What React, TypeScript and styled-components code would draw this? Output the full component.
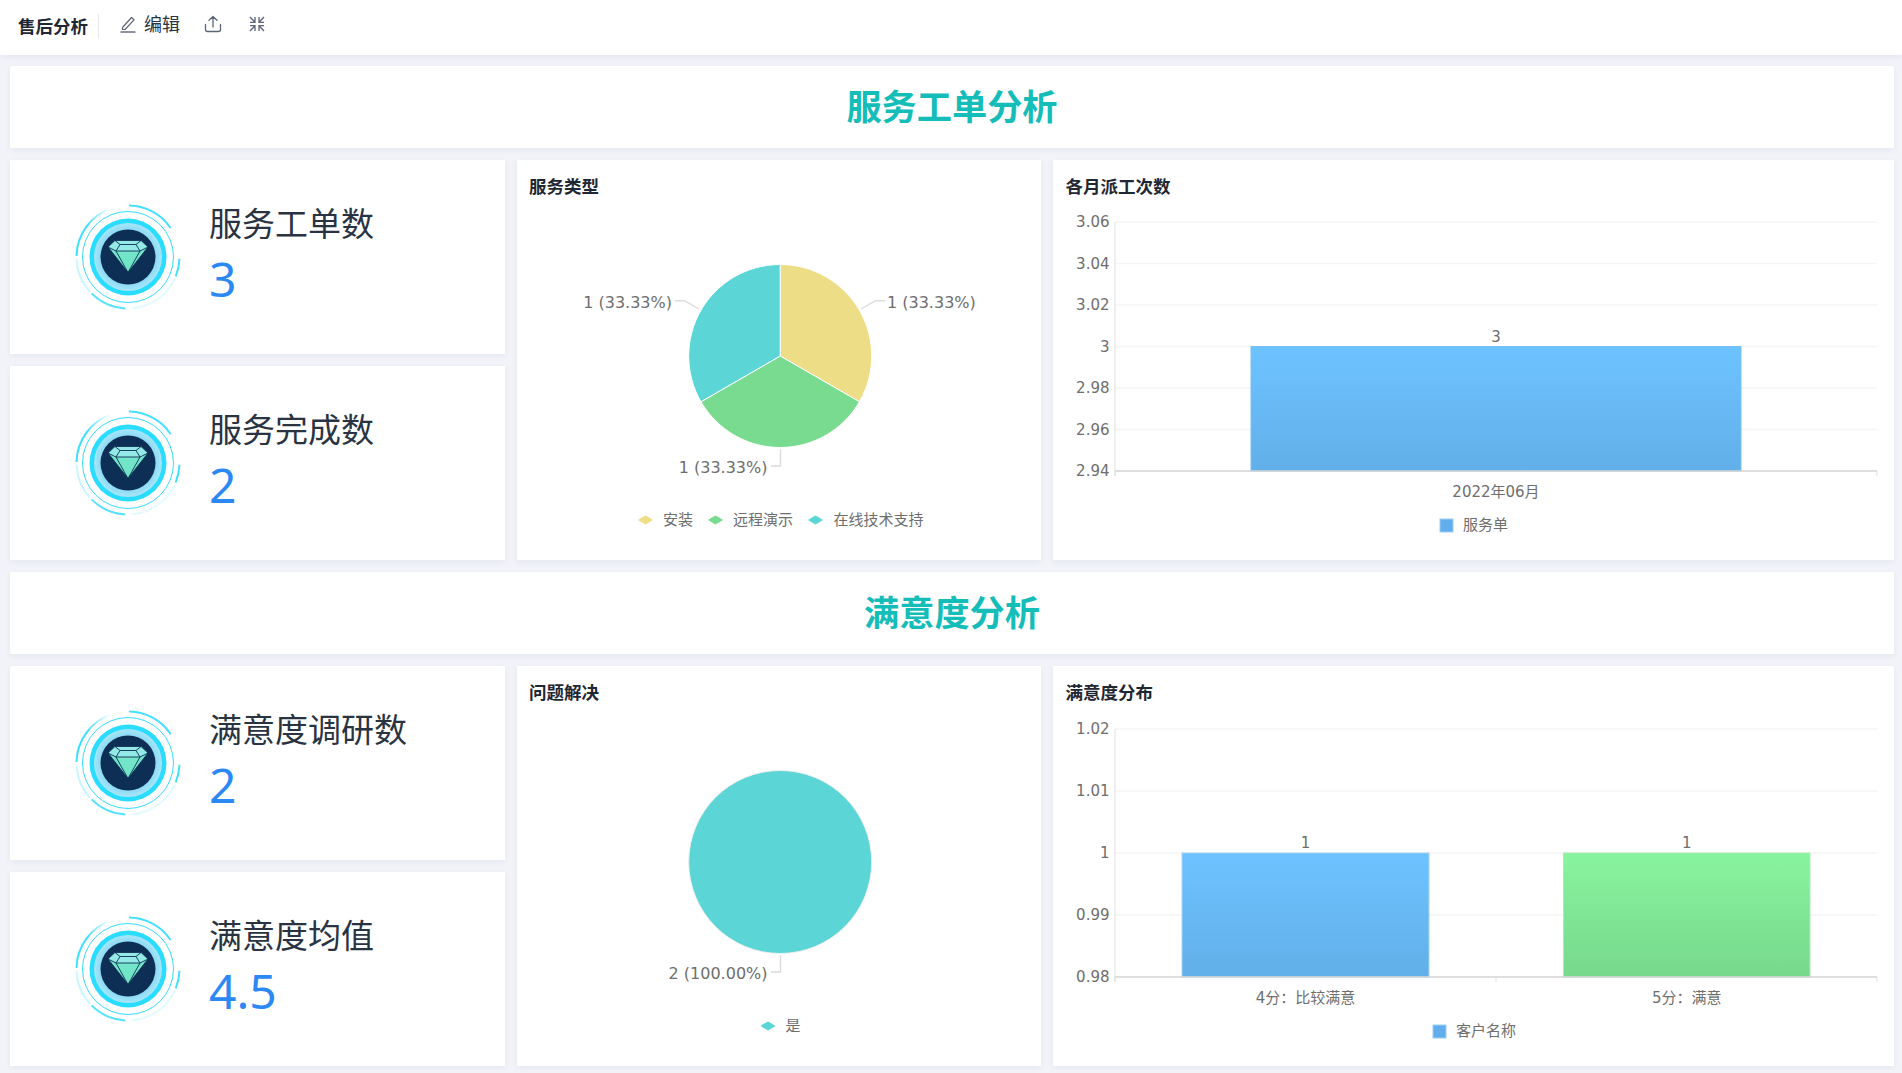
import React from 'react';
import styled, { createGlobalStyle } from 'styled-components';

const GlobalStyle = createGlobalStyle`
  html, body {
    margin: 0;
    padding: 0;
    height: 100%;
    overflow: hidden;
    background: #f1f3f8;
    font-family: "Noto Sans", "Noto Sans CJK SC", sans-serif;
  }
`;

const Page = styled.div`
  display: flex;
  flex-direction: column;
  height: 1073px;
  background: #f1f3f8;
`;
const TopBar = styled.header`
  display: flex;
  align-items: center;
  height: 55px;
  flex: none;
  box-sizing: border-box;
  padding: 0 0 2px 18px;
  background: #fff;
  box-shadow: 0 2px 6px rgba(40, 50, 100, 0.06);
`;
const BoardName = styled.span`
  font-size: 17.5px;
  font-weight: 700;
  color: #1f2733;
  padding-right: 10px;
  border-right: 1px solid #e6e8ec;
  line-height: 25px;
  margin-right: 20px;
`;
const EditText = styled.span`
  font-size: 18px;
  color: #2a3342;
  margin: 0 24px 8px 7px;
`;
const IconButton = styled.span<{ $gap?: number }>`
  display: flex;
  color: #5a6678;
  margin-bottom: 5px;
  margin-right: ${({ $gap }) => $gap ?? 0}px;
`;
const Content = styled.main`
  display: flex;
  flex-direction: column;
  gap: 12px;
  padding: 11px 8px 0 10px;
`;
const SectionHead = styled.h2`
  margin: 0;
  height: 82px;
  box-sizing: border-box;
  padding-bottom: 5px;
  display: flex;
  align-items: center;
  justify-content: center;
  background: #fff;
  font-size: 35.2px;
  font-weight: 700;
  color: #14bdb8;
  box-shadow: 0 2px 6px rgba(40, 50, 100, 0.06);
`;
const Row = styled.section`
  display: grid;
  grid-template-columns: 494.5px 524.5px 1fr;
  gap: 12px;
  height: 400px;
`;
const StatColumn = styled.div`
  display: flex;
  flex-direction: column;
  gap: 12px;
`;
const StatCard = styled.div`
  flex: 1;
  display: flex;
  align-items: center;
  padding-left: 58px;
  gap: 21px;
  background: #fff;
  box-shadow: 0 2px 6px rgba(40, 50, 100, 0.06);
`;
const StatBody = styled.div`
  display: flex;
  flex-direction: column;
  gap: 5px;
  padding-bottom: 2px;
`;
const StatLabel = styled.div`
  font-size: 33px;
  line-height: 40px;
  color: #2a3342;
`;
const StatValue = styled.div`
  font-size: 48px;
  line-height: 60px;
  color: #2b88f5;
`;
const ChartCard = styled.div`
  display: flex;
  flex-direction: column;
  background: #fff;
  box-shadow: 0 2px 6px rgba(40, 50, 100, 0.06);
`;
const ChartTitle = styled.h3`
  margin: 0;
  height: 54px;
  flex: none;
  box-sizing: border-box;
  padding: 14px 0 0 12.5px;
  font-size: 17.5px;
  line-height: 24px;
  font-weight: 700;
  color: #1f2733;
`;
const ChartSvg = styled.svg`
  display: block;
  flex: 1;
  width: 100%;
  min-height: 0;
`;
const ChartText = styled.text<{ $size?: number }>`
  font-family: "DejaVu Sans", "Noto Sans CJK SC", sans-serif;
  font-size: ${({ $size }) => $size ?? 15}px;
  fill: #6e6e6e;
  dominant-baseline: central;
`;

type Slice = { color: string; from: number; to: number };
type Leader = { points: string; label: string; x: number; y: number; anchor: 'start' | 'end' };
type LegendItem = { color: string; label: string; x: number; textX: number };

const polar = (cx: number, cy: number, r: number, deg: number): [number, number] => {
  const a = ((deg - 90) * Math.PI) / 180;
  return [cx + r * Math.cos(a), cy + r * Math.sin(a)];
};
const arc = (cx: number, cy: number, r: number, from: number, to: number) => {
  const [x1, y1] = polar(cx, cy, r, from);
  const [x2, y2] = polar(cx, cy, r, to);
  return `M${x1} ${y1}A${r} ${r} 0 ${to - from > 180 ? 1 : 0} 1 ${x2} ${y2}`;
};

function Pie({ slices, leaders, legend, legendY }: { slices: Slice[]; leaders: Leader[]; legend: LegendItem[]; legendY: number }) {
  const cx = 263.2;
  const cy = 142;
  const r = 91.5;
  return (
    <ChartSvg viewBox="0 0 524.5 346">
      {slices.length === 1 ? (
        <circle cx={cx} cy={cy} r={r} fill={slices[0].color} stroke="#eef0f0" strokeWidth={1} />
      ) : (
        slices.map((s) => (
          <path key={s.color} d={`${arc(cx, cy, r, s.from, s.to)}L${cx} ${cy}Z`} fill={s.color} stroke="#fff" strokeWidth={1} />
        ))
      )}
      {leaders.map((l) => (
        <g key={l.points}>
          <polyline points={l.points} fill="none" stroke="#dcdcdc" strokeWidth={1.4} />
          <ChartText $size={16} x={l.x} y={l.y} textAnchor={l.anchor}>
            {l.label}
          </ChartText>
        </g>
      ))}
      {legend.map((item) => (
        <g key={item.label}>
          <path
            transform={`translate(${item.x} ${legendY - 4.5})`}
            d="M0 4.5Q4 1.5 7.5 0Q11 1.5 15 4.5Q11 7 7.5 9Q4 7 0 4.5Z"
            fill={item.color}
          />
          <ChartText x={item.textX} y={legendY}>
            {item.label}
          </ChartText>
        </g>
      ))}
    </ChartSvg>
  );
}

type Bar = { x: number; w: number; label: string; top: string; bottom: string; border: string; value: string };

function Bars({ ticks, top, bars, ticksX, legend, id }: { ticks: string[]; top: number; bars: Bar[]; ticksX: number[]; legend: { label: string; x: number; textX: number }; id: string }) {
  const left = 62;
  const right = 824;
  const bottom = 257;
  const step = (bottom - top) / (ticks.length - 1);
  const barTop = top + step * (ticks.length === 7 ? 3 : 2);
  return (
    <ChartSvg viewBox="0 0 841 346">
      <defs>
        {bars.map((b, i) => (
          <linearGradient key={i} id={`${id}${i}`} x1="0" y1="0" x2="0" y2="1">
            <stop offset="0" stopColor={b.top} />
            <stop offset="1" stopColor={b.bottom} />
          </linearGradient>
        ))}
      </defs>
      {ticks.map((t, i) => {
        const y = top + step * i;
        return (
          <g key={t}>
            {i < ticks.length - 1 && <line x1={left} x2={right} y1={y} y2={y} stroke="#f5f5f6" strokeWidth={1.4} />}
            <ChartText x={56.5} y={y} textAnchor="end">
              {t}
            </ChartText>
          </g>
        );
      })}
      <line x1={left} x2={left} y1={top} y2={bottom + 5} stroke="#dfdfdf" />
      {bars.map((b, i) => (
        <g key={b.label}>
          <rect x={b.x} y={barTop} width={b.w} height={bottom - barTop} fill={`url(#${id}${i})`} stroke={b.border} />
          <ChartText x={b.x + b.w / 2} y={barTop - 10} textAnchor="middle">
            {b.value}
          </ChartText>
          <ChartText x={b.x + b.w / 2} y={bottom + 21} textAnchor="middle">
            {b.label}
          </ChartText>
        </g>
      ))}
      <line x1={left} x2={right} y1={bottom} y2={bottom} stroke="#d4d4d4" strokeWidth={1.4} />
      {ticksX.map((x) => (
        <line key={x} x1={x} x2={x} y1={bottom} y2={bottom + 5} stroke="#dfdfdf" />
      ))}
      <rect x={legend.x} y={305} width={13} height={13} fill="#62aeec" stroke="#9ccdf3" />
      <ChartText x={legend.textX} y={311}>
        {legend.label}
      </ChartText>
    </ChartSvg>
  );
}

function RingIcon() {
  const c = 60;
  return (
    <svg width={120} height={120} viewBox="0 0 120 120">
      <defs>
        <linearGradient id="fadeA" x1="0" y1="1" x2="1" y2="0">
          <stop offset="0" stopColor="#3fdfff" />
          <stop offset="0.5" stopColor="#3fdfff" />
          <stop offset="1" stopColor="#3fdfff" stopOpacity="0" />
        </linearGradient>
        <linearGradient id="fadeB" x1="1" y1="0" x2="0" y2="1">
          <stop offset="0" stopColor="#3fdfff" stopOpacity="0.05" />
          <stop offset="1" stopColor="#3fdfff" stopOpacity="0.45" />
        </linearGradient>
        <linearGradient id="fadeC" x1="0" y1="0" x2="1" y2="1">
          <stop offset="0" stopColor="#3fdfff" stopOpacity="0.35" />
          <stop offset="1" stopColor="#3fdfff" stopOpacity="0" />
        </linearGradient>
        <radialGradient id="glow" cx="0.5" cy="0.5" r="0.5">
          <stop offset="0.72" stopColor="#7fd4f2" />
          <stop offset="1" stopColor="#a8e6f8" />
        </radialGradient>
      </defs>
      <circle cx={c} cy={c} r={45.5} fill="none" stroke="#35dcff" strokeWidth={1} />
      <circle cx={c} cy={c} r={38.5} fill="#2adcff" />
      <circle cx={c} cy={c} r={34} fill="url(#glow)" />
      <circle cx={c} cy={c} r={27.5} fill="#0e2f55" />
      <path d={arc(c, c, 51.5, 2, 55)} fill="none" stroke="#45dfff" strokeWidth={2} strokeLinecap="round" />
      <path d={arc(c, c, 51.5, 92, 112)} fill="none" stroke="#45dfff" strokeWidth={2} />
      <path d={arc(c, c, 51.5, 115, 175)} fill="none" stroke="url(#fadeC)" strokeWidth={2} />
      <path d={arc(c, c, 51.5, 183, 225)} fill="none" stroke="#55e2ff" strokeWidth={2} />
      <path d={arc(c, c, 51.5, 228, 268)} fill="none" stroke="url(#fadeB)" strokeWidth={2} />
      <path d={arc(c, c, 51.5, 271, 340)} fill="none" stroke="url(#fadeA)" strokeWidth={2} />
      <path d="M47 43.5H73L80 50L60 75.5L40 50Z" fill="#72e4c8" />
      <path d="M47 43.5H73L80 50L72 54H48L40 50Z" fill="#93e9e6" />
      <path d="M47 43.5H73L80 50L60 75.5L40 50ZM40 50L48 54H72L80 50M52 47.5H68L72 54L60 75.5L48 54ZM47 43.5L52 47.5M73 43.5L68 47.5" fill="none" stroke="#0e2f55" strokeWidth={0.9} strokeLinejoin="round" />
    </svg>
  );
}

const STAT_ROWS = [
  [
    { label: '服务工单数', value: '3' },
    { label: '服务完成数', value: '2' },
  ],
  [
    { label: '满意度调研数', value: '2' },
    { label: '满意度均值', value: '4.5' },
  ],
];

const YELLOW = '#eddd86';
const GREEN = '#78db8f';
const TEAL = '#5bd5d6';

function StatCards({ items }: { items: { label: string; value: string }[] }) {
  return (
    <StatColumn>
      {items.map((s) => (
        <StatCard key={s.label}>
          <RingIcon />
          <StatBody>
            <StatLabel>{s.label}</StatLabel>
            <StatValue>{s.value}</StatValue>
          </StatBody>
        </StatCard>
      ))}
    </StatColumn>
  );
}

export default function App() {
  return (
    <Page>
      <GlobalStyle />
      <TopBar>
        <BoardName>售后分析</BoardName>
        <IconButton>
          <svg width={18} height={18} viewBox="0 0 18 18" fill="none" stroke="currentColor" strokeWidth={1.2} strokeLinejoin="round">
            <path d="M3.5 12.5L12.5 2.5L15 4.8L6 14.5H3.5Z" />
            <path d="M1.5 17H16.5" strokeWidth={1.4} />
          </svg>
        </IconButton>
        <EditText>编辑</EditText>
        <IconButton $gap={27}>
          <svg width={18} height={18} viewBox="0 0 18 18" fill="none" stroke="currentColor" strokeWidth={1.3} strokeLinecap="round" strokeLinejoin="round">
            <path d="M9 12V1.5M5 5.3L9 1.5L13 5.3" />
            <path d="M1.5 9.5V14.5A2 2 0 0 0 3.5 16.5H14.5A2 2 0 0 0 16.5 14.5V9.5" />
          </svg>
        </IconButton>
        <IconButton>
          <svg width={16} height={16} viewBox="0 0 16 16" fill="none" stroke="currentColor" strokeWidth={1.3}>
            <path d="M1 1L5.5 5.8M6 1V6.3H1" />
            <path d="M15 1L10.5 5.8M10 1V6.3H15" />
            <path d="M1 15L5.5 10.2M6 15V9.7H1" />
            <path d="M15 15L10.5 10.2M10 15V9.7H15" />
          </svg>
        </IconButton>
      </TopBar>
      <Content>
        <SectionHead>服务工单分析</SectionHead>
        <Row>
          <StatCards items={STAT_ROWS[0]} />
          <ChartCard>
            <ChartTitle>服务类型</ChartTitle>
            <Pie
              slices={[
                { color: YELLOW, from: 0, to: 120 },
                { color: GREEN, from: 120, to: 240 },
                { color: TEAL, from: 240, to: 360 },
              ]}
              leaders={[
                { points: '344,95 358.5,86.7 368,86.7', label: '1 (33.33%)', x: 370, y: 88, anchor: 'start' },
                { points: '182,95 167.5,86.7 158,86.7', label: '1 (33.33%)', x: 155, y: 88, anchor: 'end' },
                { points: '263.5,235 263.5,252 254,252', label: '1 (33.33%)', x: 250.5, y: 253, anchor: 'end' },
              ]}
              legend={[
                { color: YELLOW, label: '安装', x: 121, textX: 146 },
                { color: GREEN, label: '远程演示', x: 191, textX: 216 },
                { color: TEAL, label: '在线技术支持', x: 291, textX: 316.5 },
              ]}
              legendY={306}
            />
          </ChartCard>
          <ChartCard>
            <ChartTitle>各月派工次数</ChartTitle>
            <Bars
              id="month"
              ticks={['3.06', '3.04', '3.02', '3', '2.98', '2.96', '2.94']}
              top={8}
              bars={[{ x: 198, w: 490, label: '2022年06月', value: '3', top: '#6dc3ff', bottom: '#62afe9', border: '#78c0f5' }]}
              ticksX={[62, 824]}
              legend={{ label: '服务单', x: 387, textX: 410 }}
            />
          </ChartCard>
        </Row>
        <SectionHead>满意度分析</SectionHead>
        <Row>
          <StatCards items={STAT_ROWS[1]} />
          <ChartCard>
            <ChartTitle>问题解决</ChartTitle>
            <Pie
              slices={[{ color: TEAL, from: 0, to: 360 }]}
              leaders={[{ points: '263.5,235 263.5,252 254,252', label: '2 (100.00%)', x: 250.5, y: 253, anchor: 'end' }]}
              legend={[{ color: TEAL, label: '是', x: 243.5, textX: 268.5 }]}
              legendY={306}
            />
          </ChartCard>
          <ChartCard>
            <ChartTitle>满意度分布</ChartTitle>
            <Bars
              id="score"
              ticks={['1.02', '1.01', '1', '0.99', '0.98']}
              top={9}
              bars={[
                { x: 129, w: 247, label: '4分：比较满意', value: '1', top: '#6dc3ff', bottom: '#62afe9', border: '#a4d4f6' },
                { x: 510.5, w: 246.5, label: '5分：满意', value: '1', top: '#88f49f', bottom: '#77d88c', border: '#a9ecb8' },
              ]}
              ticksX={[62, 443, 824]}
              legend={{ label: '客户名称', x: 380, textX: 403 }}
            />
          </ChartCard>
        </Row>
      </Content>
    </Page>
  );
}
